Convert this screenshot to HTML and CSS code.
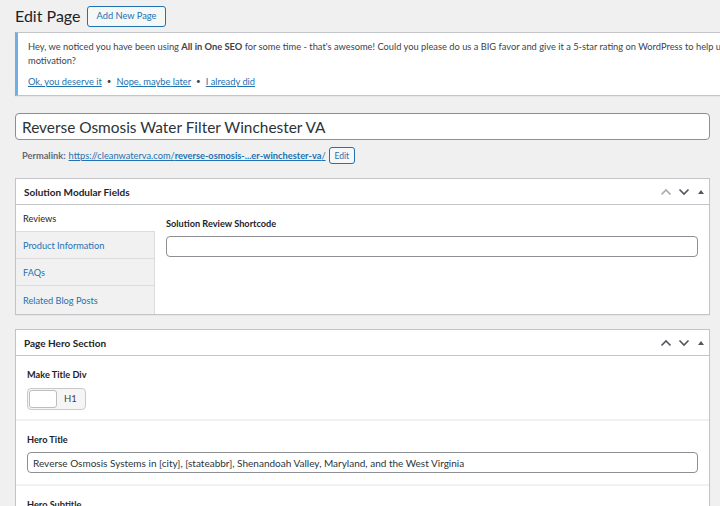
FILE: index.html
```html
<!DOCTYPE html>
<html lang="en">
<head>
<meta charset="utf-8">
<title>Edit Page</title>
<link rel="stylesheet" href="styles.css">
</head>
<body>
<div class="wrap">
  <div class="page-head">
    <h1 class="page-title">Edit Page</h1>
    <a class="btn-add" href="#">Add New Page</a>
  </div>

  <div class="notice">
    <p class="notice-text"><span class="nowrap">Hey, we noticed you have been using <strong>All in One SEO</strong> for some time - that's awesome! Could you please do us a BIG favor and give it a 5-star rating on WordPress to help us spread the word and boost our</span><br>motivation?</p>
    <p class="notice-links"><a href="#">Ok, you deserve it</a><span class="dot">•</span><a href="#">Nope, maybe later</a><span class="dot">•</span><a href="#">I already did</a></p>
  </div>

  <input class="title-input" type="text" value="Reverse Osmosis Water Filter Winchester VA">

  <div class="permalink">
    <span class="perma-label">Permalink:</span>
    <a class="perma-link" href="#">https://cleanwaterva.com/<strong>reverse-osmosis-...er-winchester-va</strong>/</a>
    <span class="btn-edit">Edit</span>
  </div>

  <div class="postbox">
    <div class="postbox-header">
      <h2 class="postbox-title">Solution Modular Fields</h2>
      <div class="handles">
        <span class="handle handle-up is-disabled"><svg width="12" height="8" viewBox="0 0 12 8"><path d="M1.5 6.5 L6 2 L10.5 6.5" fill="none" stroke="currentColor" stroke-width="1.6"/></svg></span>
        <span class="handle handle-down"><svg width="12" height="8" viewBox="0 0 12 8"><path d="M1.5 1.5 L6 6 L10.5 1.5" fill="none" stroke="currentColor" stroke-width="1.6"/></svg></span>
        <span class="handle handle-toggle"><svg width="6" height="4" viewBox="0 0 6 4"><path d="M0 4 L3 0 L6 4 Z" fill="currentColor"/></svg></span>
      </div>
    </div>
    <div class="tabbed">
      <ul class="tabs">
        <li class="tab is-active">Reviews</li>
        <li class="tab">Product Information</li>
        <li class="tab">FAQs</li>
        <li class="tab">Related Blog Posts</li>
      </ul>
      <div class="tab-panel">
        <label class="field-label">Solution Review Shortcode</label>
        <input class="field-input" type="text" value="">
      </div>
    </div>
  </div>

  <div class="postbox">
    <div class="postbox-header">
      <h2 class="postbox-title">Page Hero Section</h2>
      <div class="handles">
        <span class="handle handle-up"><svg width="12" height="8" viewBox="0 0 12 8"><path d="M1.5 6.5 L6 2 L10.5 6.5" fill="none" stroke="currentColor" stroke-width="1.6"/></svg></span>
        <span class="handle handle-down"><svg width="12" height="8" viewBox="0 0 12 8"><path d="M1.5 1.5 L6 6 L10.5 1.5" fill="none" stroke="currentColor" stroke-width="1.6"/></svg></span>
        <span class="handle handle-toggle"><svg width="6" height="4" viewBox="0 0 6 4"><path d="M0 4 L3 0 L6 4 Z" fill="currentColor"/></svg></span>
      </div>
    </div>
    <div class="fields">
      <div class="field">
        <label class="field-label">Make Title Div</label>
        <div class="switch"><span class="switch-slider"></span><span class="switch-text">H1</span></div>
      </div>
      <div class="field">
        <label class="field-label">Hero Title</label>
        <input class="field-input" type="text" value="Reverse Osmosis Systems in [city], [stateabbr], Shenandoah Valley, Maryland, and the West Virginia">
      </div>
      <div class="field">
        <label class="field-label">Hero Subtitle</label>
        <input class="field-input" type="text" value="">
      </div>
    </div>
  </div>
</div>
</body>
</html>
```

FILE: styles.css
```css
html, body {
  margin: 0;
  padding: 0;
  background: #f0f0f1;
  overflow: hidden;
}
body {
  font-family: Lato, "Open Sans", sans-serif;
  font-size: 9.2px;
  color: #3c434a;
  line-height: 14px;
}
.wrap {
  width: 695px;
  padding-left: 15px;
}
.page-head {
  display: flex;
  align-items: center;
  height: 32px;
  gap: 7px;
}
.page-title {
  margin: 0;
  font-size: 16px;
  font-weight: 400;
  color: #1d2327;
  line-height: 22px;
}
.btn-add {
  display: flex;
  align-items: center;
  box-sizing: border-box;
  height: 21px;
  padding: 0 8px;
  border: 1px solid #2271b1;
  border-radius: 3px;
  background: #f6f7f7;
  color: #2271b1;
  text-decoration: none;
  font-size: 9.3px;
}
.notice {
  margin-right: -300px;
  background: #fff;
  border: 1px solid #c3c4c7;
  border-left: 3px solid #72aee6;
  box-shadow: 0 1px 1px rgba(0,0,0,.04);
  padding: 7px 12px 7px 10px;
  font-size: 9.3px;
}
.notice p { margin: 0; }
.notice-text { color: #3c434a; }
.notice-text strong { font-weight: 700; color: #3c434a; }
.nowrap { white-space: nowrap; }
.notice-links {
  margin-top: 6px !important;
  height: 14px;
  padding-top: 1px;
  box-sizing: border-box;
}
.notice-links a {
  color: #2271b1;
  text-decoration: underline;
}
.dot {
  display: inline-block;
  vertical-align: top;
  line-height: 13px;
  margin: 0 5px;
  color: #3c434a;
  font-size: 8px;
}
input {
  font-family: inherit;
  box-sizing: border-box;
  outline: none;
}
.title-input {
  display: block;
  margin-top: 17px;
  width: 100%;
  height: 27px;
  padding: 0 6px;
  border: 1px solid #8c8f94;
  border-radius: 4px;
  background: #fff;
  font-size: 15.4px;
  color: #2c3338;
}
.permalink {
  display: flex;
  align-items: center;
  height: 17px;
  margin-top: 7px;
  padding-left: 7px;
  font-size: 9.25px;
}
.perma-label {
  color: #646970;
  font-weight: 700;
  margin-right: 3px;
}
.perma-link {
  color: #2271b1;
  text-decoration: underline;
}
.perma-link strong { font-weight: 700; }
.btn-edit {
  display: flex;
  align-items: center;
  box-sizing: border-box;
  height: 17px;
  margin-left: 3px;
  padding: 0 5px;
  border: 1px solid #2271b1;
  border-radius: 3px;
  background: #f6f7f7;
  color: #2271b1;
  font-size: 8.5px;
}
.postbox {
  margin-top: 14px;
  background: #fff;
  border: 1px solid #c3c4c7;
  box-shadow: 0 1px 1px rgba(0,0,0,.04);
}
.postbox-header {
  display: flex;
  align-items: center;
  justify-content: space-between;
  height: 25px;
  padding-left: 8px;
  border-bottom: 1px solid #c3c4c7;
}
.postbox-title {
  margin: 0;
  font-size: 10px;
  font-weight: 700;
  color: #1d2327;
}
.handles {
  display: flex;
  height: 100%;
}
.handle {
  display: flex;
  align-items: center;
  justify-content: center;
  width: 18px;
  color: #50575e;
}
.handle.is-disabled { color: #a7aaad; }
.handle-toggle { width: 16px; }
.tabbed {
  display: grid;
  grid-template-columns: 139px 1fr;
}
.tabs {
  list-style: none;
  margin: 0;
  padding: 0;
  background: #f1f1f1;
  border-right: 1px solid #dcdcde;
}
.tab {
  box-sizing: border-box;
  height: 27px;
  display: flex;
  align-items: center;
  padding-left: 7px;
  padding-top: 2px;
  border-bottom: 1px solid #dcdcde;
  color: #2271b1;
}
.tab:last-child { border-bottom: 0; height: 28px; }
.tab.is-active {
  background: #fff;
  color: #1d2327;
  margin-right: -1px;
}
.tab-panel {
  padding: 11px 11px 0 11px;
}
.field-label {
  display: block;
  padding-top: 1px;
  font-weight: 700;
  color: #1d2327;
}
.field-input {
  display: block;
  width: 100%;
  height: 21px;
  margin-top: 5px;
  padding: 0 5px;
  border: 1px solid #8c8f94;
  border-radius: 4px;
  background: #fff;
  font-size: 10px;
  color: #2c3338;
}
.field {
  padding: 11px;
  border-top: 2px solid #f1f1f1;
}
.field:first-child {
  border-top: 0;
  padding-top: 11px;
  padding-bottom: 9px;
}
.switch {
  display: flex;
  align-items: center;
  box-sizing: border-box;
  width: 59px;
  height: 22px;
  margin-top: 6px;
  padding: 1px;
  border: 1px solid #c9c9c9;
  border-radius: 4px;
  background: #f5f5f5;
}
.switch-slider {
  box-sizing: border-box;
  width: 28px;
  height: 18px;
  border: 1px solid #bdbdbd;
  border-radius: 3px;
  background: #fff;
}
.switch-text {
  flex: 1;
  text-align: center;
  color: #3c434a;
  font-size: 9.5px;
}
```
